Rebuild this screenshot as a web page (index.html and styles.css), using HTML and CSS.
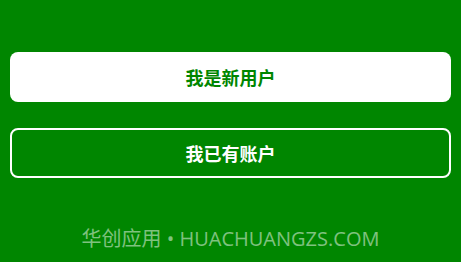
FILE: index.html
```html
<!DOCTYPE html>
<html lang="zh-CN">

<head>
    <meta charset="UTF-8">
    <meta name="viewport" content="width=device-width, initial-scale=1.0">
    <title>华创应用</title>
    <link rel="stylesheet" href="styles.css">
</head>

<body>
    <div class="actions">
        <button class="btn btn-primary">我是新用户</button>
        <button class="btn btn-outline">我已有账户</button>
    </div>
    <div class="footer">华创应用 • HUACHUANGZS.COM</div>
</body>

</html>
```

FILE: styles.css
```css
html,
body {
    margin: 0;
    height: 100%;
}

body {
    background-color: #008600;
    font-family: "Open Sans", "Noto Sans CJK SC", sans-serif;
    padding: 52px 10px 0;
    box-sizing: border-box;
}

.actions {
    display: flex;
    flex-direction: column;
    gap: 26px;
}

.btn {
    height: 50px;
    border-radius: 8px;
    font-family: "Noto Sans CJK SC", sans-serif;
    font-size: 18px;
    font-weight: bold;
    cursor: pointer;
}

.btn-primary {
    background-color: #ffffff;
    color: #008600;
    border: none;
}

.btn-outline {
    background-color: transparent;
    color: #ffffff;
    border: 2px solid #ffffff;
}

.footer {
    margin-top: 48px;
    text-align: center;
    font-size: 20px;
    line-height: 26px;
    color: rgba(255, 255, 255, 0.5);
}
```
